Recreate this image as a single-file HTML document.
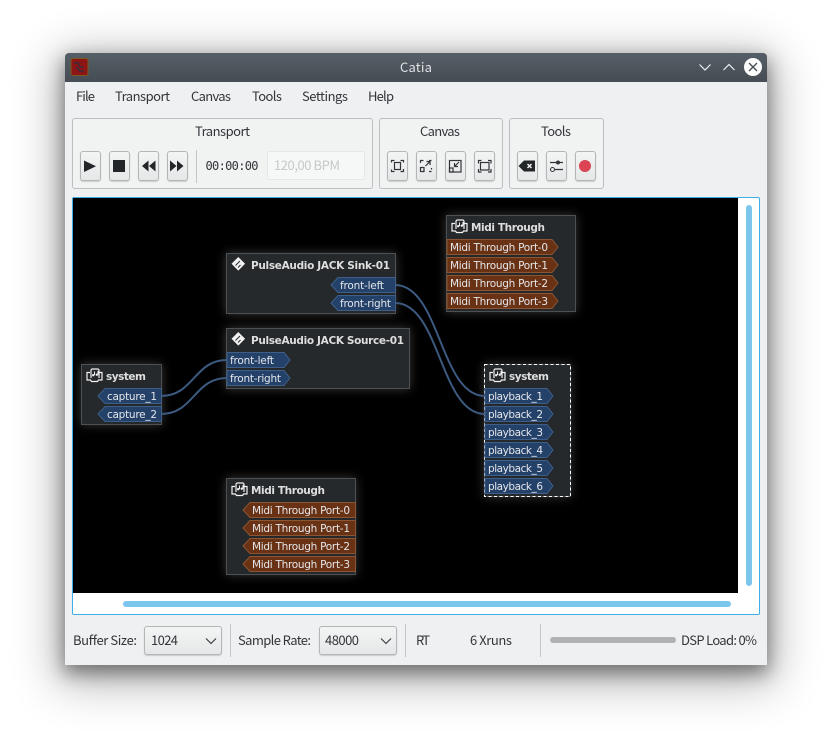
<!DOCTYPE html>
<html><head><meta charset="utf-8"><style>
html,body{margin:0;padding:0;background:#fff;width:832px;height:742px;overflow:hidden}
.a{position:absolute;box-sizing:border-box}
#win{left:65px;top:53px;width:702px;height:612px;background:#eff0f1;border-radius:4px 4px 0 0;box-shadow:0 7px 18px 1px rgba(0,0,0,.42),0 10px 46px 8px rgba(0,0,0,.3)}
#tb{left:65px;top:53px;width:702px;height:29px;background:linear-gradient(#565f67,#454c53);border-radius:4px 4px 0 0}
.g{border:1px solid #bcbebf;border-radius:3px;background:#f1f2f2;top:118px;height:71px}
.b{top:151px;width:21px;height:30px;border:1px solid #b3b5b6;border-radius:3px;background:linear-gradient(#f3f4f4,#e6e7e8);box-shadow:0 1px 1px rgba(0,0,0,.15)}
.c{top:626px;width:78px;height:29px;border:1px solid #b3b5b6;border-radius:3px;background:linear-gradient(#f3f4f4,#e6e7e8);box-shadow:0 1px 1px rgba(0,0,0,.15)}
.s{width:1px;background:#c3c5c6}
svg{position:absolute;left:0;top:0}
.u{font-family:"Liberation Sans","Noto Sans CJK JP",sans-serif;font-family:"Noto Sans CJK JP","Liberation Sans",sans-serif;font-size:13px;fill:#31363b}
.d{font-family:"DejaVu Sans",sans-serif;font-size:10.5px;fill:#e4e6ea}
.h{font-family:"DejaVu Sans",sans-serif;font-size:10.5px;font-weight:bold;fill:#dedede}
.box{fill:#25292b;stroke:#4d5153;stroke-width:1}
.glow{filter:drop-shadow(0 0 5px rgba(255,255,255,.22))}
.pb{fill:#244169;stroke:#3f5f89;stroke-width:1}
.po{fill:#6a3214;stroke:#8c5632;stroke-width:1}
.ic{fill:none;stroke:#f2f2f2;stroke-width:1.2}
.nt{fill:#f2f2f2}
.t{fill:none;stroke:#31363b;stroke-width:1.2}
</style></head><body>
<div class="a" id="win"></div>
<div class="a" id="tb"></div>
<div class="a g" style="left:72px;width:301px"></div>
<div class="a g" style="left:379px;width:124px"></div>
<div class="a g" style="left:509px;width:95px"></div>
<div class="a b" style="left:80px"></div><div class="a b" style="left:109px"></div><div class="a b" style="left:138px"></div><div class="a b" style="left:167px"></div>
<div class="a b" style="left:387px"></div><div class="a b" style="left:416px"></div><div class="a b" style="left:445px"></div><div class="a b" style="left:474px"></div>
<div class="a b" style="left:517px"></div><div class="a b" style="left:546px"></div><div class="a b" style="left:575px"></div>
<div class="a s" style="left:196px;top:150px;height:33px"></div>
<div class="a" style="left:267px;top:151px;width:98px;height:29px;background:#f6f7f7;border:1px solid #e6e7e8;border-radius:3px"></div>
<div class="a" style="left:72px;top:197px;width:688px;height:418px;background:#fff;border:1px solid #3daee9;border-radius:2px"></div>
<div class="a" style="left:73px;top:198px;width:665px;height:395px;background:#000"></div>
<div class="a" style="left:746px;top:205px;width:6px;height:381px;background:#7cc6ee;border-radius:3px"></div>
<div class="a" style="left:123px;top:601px;width:608px;height:6px;background:#7cc6ee;border-radius:3px"></div>
<div class="a c" style="left:144px"></div><div class="a c" style="left:319px"></div>
<div class="a s" style="left:230px;top:624px;height:33px"></div>
<div class="a s" style="left:405px;top:624px;height:33px"></div>
<div class="a s" style="left:540px;top:624px;height:33px"></div>
<div class="a" style="left:550px;top:637px;width:126px;height:6px;background:#b0b2b3;border-radius:3px"></div>

<svg width="832" height="742" viewBox="0 0 832 742">
<!-- app icon -->
<rect x="71" y="58.500" width="17" height="17" rx="2" fill="#8c1515" stroke="#7a5a20"/>
<path d="M74 63l4 0 2 4 3 0M76 67l4 4 4 0" fill="none" stroke="#3a2a3a" stroke-width="1.500"/>
<text x="416" y="72" text-anchor="middle" font-family="Noto Sans CJK JP,Liberation Sans,sans-serif" font-size="13" fill="#dfe2e4" textLength="32">Catia</text>
<path d="M699.500 64.500l5.500 5.500 5.500-5.500M723.500 70l5.500-5.500 5.500 5.500" fill="none" stroke="#eff0f1" stroke-width="1.200"/>
<circle cx="753" cy="67" r="9" fill="#fcfcfc"/>
<path d="M749 63l8 8M757 63l-8 8" stroke="#454c53" stroke-width="1.300"/>
<!-- menu -->
<text class="u" x="76" y="101" textLength="19">File</text>
<text class="u" x="115" y="101" textLength="55">Transport</text>
<text class="u" x="191" y="101" textLength="40">Canvas</text>
<text class="u" x="252" y="101" textLength="30">Tools</text>
<text class="u" x="302" y="101" textLength="46">Settings</text>
<text class="u" x="368" y="101" textLength="26">Help</text>
<text class="u" x="195" y="136" textLength="55">Transport</text>
<text class="u" x="420" y="136" textLength="40">Canvas</text>
<text class="u" x="541" y="136" textLength="30">Tools</text>
<!-- transport icons -->
<path d="M84 160.500v11.500l12-5.750z" fill="#232629"/>
<rect x="113" y="160" width="12" height="12" fill="#232629"/>
<path d="M148.500 160.500v11l-6.500-5.500zM155.500 160.500v11l-6.500-5.500z" fill="#232629"/>
<path d="M170 160.500v11l6.500-5.500zM177 160.500v11l6.500-5.500z" fill="#232629"/>
<text x="205.500" y="170" font-family="DejaVu Sans Mono,Liberation Mono,monospace" font-size="12" fill="#31363b" textLength="53">00:00:00</text>
<text x="274" y="170" font-family="Noto Sans CJK JP,Liberation Sans,sans-serif" font-size="13" fill="#c6c8ca" textLength="66">120,00 BPM</text>
<!-- canvas icons -->
<g class="t">
<path d="M391.500 162.500v-2h3M400.500 160.500h3v2M403.500 169v2.500h-3M394.500 171.500h-3v-2"/><rect x="394.500" y="162.500" width="6" height="7"/>
<path d="M420.500 163v-2.500h3M429 160.500h2.500M431.500 168v1.500M431.500 171.500h-2.500M424 171.500h-1"/><rect x="420.500" y="167.500" width="3.500" height="4"/><path d="M425.500 166l4.500-4.500M426.500 161.500h3.500v3.500"/>
<rect x="449.500" y="160.500" width="11.500" height="11.500"/><rect x="449.500" y="168" width="3.500" height="4"/><path d="M459 162l-4.500 4.500M454.500 163v3.500h3.500"/>
<path d="M478.500 163.500v-3h3M488 160.500h3v3M491 169v3h-3M481.500 172h-3v-3"/><rect x="480.500" y="162.500" width="8.500" height="7.500"/>
</g>
<!-- tools icons -->
<path d="M518.500 166l5.500-5.500h11v11h-11z" fill="#232629"/><path d="M527.500 164l4 4M531.500 164l-4 4" stroke="#f0f0f0" stroke-width="1.500"/>
<path d="M550 162.500h13M550 169.500h13" stroke="#31363b" stroke-width="1.200"/><circle cx="558" cy="162.500" r="2" fill="#31363b"/><circle cx="552.500" cy="169.500" r="2" fill="#eee" stroke="#31363b"/>
<circle cx="585" cy="166" r="6" fill="#da4453"/>
<!-- status -->
<text class="u" x="73" y="645" textLength="64">Buffer Size:</text>
<text class="u" x="151" y="645" textLength="27">1024</text>
<path d="M206 638.500l5 5 5-5M381 638.500l5 5 5-5" fill="none" stroke="#31363b" stroke-width="1.100"/>
<text class="u" x="238" y="645" textLength="73">Sample Rate:</text>
<text class="u" x="325" y="645" textLength="34">48000</text>
<text class="u" x="416" y="645" textLength="14">RT</text>
<text class="u" x="470" y="645" textLength="42">6 Xruns</text>
<text class="u" x="681" y="645" textLength="76">DSP Load: 0%</text>

<!-- jack canvas boxes -->
<g class="glow">
<rect class="box" x="226.500" y="253.500" width="169" height="60"/>
<rect class="box" x="226.500" y="328.500" width="183" height="60"/>
<rect class="box" x="81.500" y="364.500" width="80" height="60"/>
<rect class="box" x="446.500" y="215.500" width="129" height="96"/>
<rect class="box" x="226.500" y="478.500" width="129" height="96"/>
<rect class="box" x="484.500" y="364.500" width="86" height="132"/>
</g>
<rect x="484.500" y="364.500" width="86" height="132" fill="none" stroke="#fff" stroke-dasharray="3 2.500"/>
<!-- connections -->
<g fill="none" stroke="#3c5a80" stroke-width="2">
<path d="M395 285C440 285 440 396 485 396"/>
<path d="M395 303C440 303 440 414 485 414"/>
<path d="M161 396C194 396 194 360 227 360"/>
<path d="M161 414C194 414 194 378 227 378"/>
</g>
<!-- titles -->
<text class="h" x="251" y="269" textLength="139">PulseAudio JACK Sink-01</text>
<text class="h" x="251" y="344" textLength="153">PulseAudio JACK Source-01</text>
<text class="h" x="106" y="380" textLength="40">system</text>
<text class="h" x="471" y="231" textLength="74">Midi Through</text>
<text class="h" x="251" y="494" textLength="74">Midi Through</text>
<text class="h" x="509" y="380" textLength="40">system</text>
<!-- diamond icons -->
<g fill="#f2f2f2">
<path d="M238.300 257l6.800 6.800-6.800 6.800-6.800-6.800z"/><path d="M235.500 265.500l4.500-4.500M238 267.500l2.500-2.500" stroke="#25292b" fill="none"/>
<path d="M238.300 332l6.800 6.800-6.800 6.800-6.800-6.800z"/><path d="M235.500 340.500l4.500-4.500M238 342.500l2.500-2.500" stroke="#25292b" fill="none"/>
</g>
<!-- system icons -->
<g class="ic">
<path d="M90 372.500h-3v7.500h3.500l1 1.500h6l1-1.500h3.500v-7.500h-3"/><path d="M91 378v-8l1-1h6l1 1v8"/>
<path d="M455 223.500h-3v7.500h3.500l1 1.500h6l1-1.500h3.500v-7.500h-3"/><path d="M456 229v-8l1-1h6l1 1v8"/>
<path d="M235 486.500h-3v7.500h3.500l1 1.500h6l1-1.500h3.500v-7.500h-3"/><path d="M236 492v-8l1-1h6l1 1v8"/>
<path d="M493 372.500h-3v7.500h3.500l1 1.500h6l1-1.500h3.500v-7.500h-3"/><path d="M494 378v-8l1-1h6l1 1v8"/>
</g>
<g class="nt">
<circle cx="93.200" cy="375.200" r="1.200"/><circle cx="96.800" cy="374.700" r="1.200"/><rect x="94" y="371.500" width="1" height="3.500"/><rect x="97.500" y="371" width="1" height="3.500"/>
<circle cx="458.200" cy="226.200" r="1.200"/><circle cx="461.800" cy="225.700" r="1.200"/><rect x="459" y="222.500" width="1" height="3.500"/><rect x="462.500" y="222" width="1" height="3.500"/>
<circle cx="238.200" cy="489.200" r="1.200"/><circle cx="241.800" cy="488.700" r="1.200"/><rect x="239" y="485.500" width="1" height="3.500"/><rect x="242.500" y="485" width="1" height="3.500"/>
<circle cx="496.200" cy="375.200" r="1.200"/><circle cx="499.800" cy="374.700" r="1.200"/><rect x="497" y="371.500" width="1" height="3.500"/><rect x="500.500" y="371" width="1" height="3.500"/>
</g>
<!-- ports -->
<path class="pb" d="M395.500 277.500H338l-7 7.500 7 7.500h57.500z"/><text class="d" x="340" y="289" textLength="44">front-left</text>
<path class="pb" d="M395.500 295.500H338l-7 7.500 7 7.500h57.500z"/><text class="d" x="340" y="307" textLength="51">front-right</text>
<path class="pb" d="M227 352.500h57l6 7.500-6 7.500h-57z"/><text class="d" x="230" y="364" textLength="44">front-left</text>
<path class="pb" d="M227 370.500h57l6 7.500-6 7.500h-57z"/><text class="d" x="230" y="382" textLength="51">front-right</text>
<path class="pb" d="M161.500 388.500H105l-7 7.500 7 7.500h56.500z"/><text class="d" x="107" y="400" textLength="50">capture_1</text>
<path class="pb" d="M161.500 406.500H105l-7 7.500 7 7.500h56.500z"/><text class="d" x="107" y="418" textLength="50">capture_2</text>

<path class="po" d="M447 239.500h105l6 7.500-6 7.500H447z"/><text class="d" x="450" y="251" textLength="98">Midi Through Port-0</text>
<path class="po" d="M447 257.500h105l6 7.500-6 7.500H447z"/><text class="d" x="450" y="269" textLength="98">Midi Through Port-1</text>
<path class="po" d="M447 275.500h105l6 7.500-6 7.500H447z"/><text class="d" x="450" y="287" textLength="98">Midi Through Port-2</text>
<path class="po" d="M447 293.500h105l6 7.500-6 7.500H447z"/><text class="d" x="450" y="305" textLength="98">Midi Through Port-3</text>

<path class="po" d="M355.500 502.500H250l-7 7.500 7 7.500h105.500z"/><text class="d" x="252" y="514" textLength="98">Midi Through Port-0</text>
<path class="po" d="M355.500 520.500H250l-7 7.500 7 7.500h105.500z"/><text class="d" x="252" y="532" textLength="98">Midi Through Port-1</text>
<path class="po" d="M355.500 538.500H250l-7 7.500 7 7.500h105.500z"/><text class="d" x="252" y="550" textLength="98">Midi Through Port-2</text>
<path class="po" d="M355.500 556.500H250l-7 7.500 7 7.500h105.500z"/><text class="d" x="252" y="568" textLength="98">Midi Through Port-3</text>

<path class="pb" d="M485 388.500h62l6 7.500-6 7.500h-62z"/><text class="d" x="488" y="400" textLength="55">playback_1</text>
<path class="pb" d="M485 406.500h62l6 7.500-6 7.500h-62z"/><text class="d" x="488" y="418" textLength="55">playback_2</text>
<path class="pb" d="M485 424.500h62l6 7.500-6 7.500h-62z"/><text class="d" x="488" y="436" textLength="55">playback_3</text>
<path class="pb" d="M485 442.500h62l6 7.500-6 7.500h-62z"/><text class="d" x="488" y="454" textLength="55">playback_4</text>
<path class="pb" d="M485 460.500h62l6 7.500-6 7.500h-62z"/><text class="d" x="488" y="472" textLength="55">playback_5</text>
<path class="pb" d="M485 478.500h62l6 7.500-6 7.500h-62z"/><text class="d" x="488" y="490" textLength="55">playback_6</text>
</svg>
</body></html>
